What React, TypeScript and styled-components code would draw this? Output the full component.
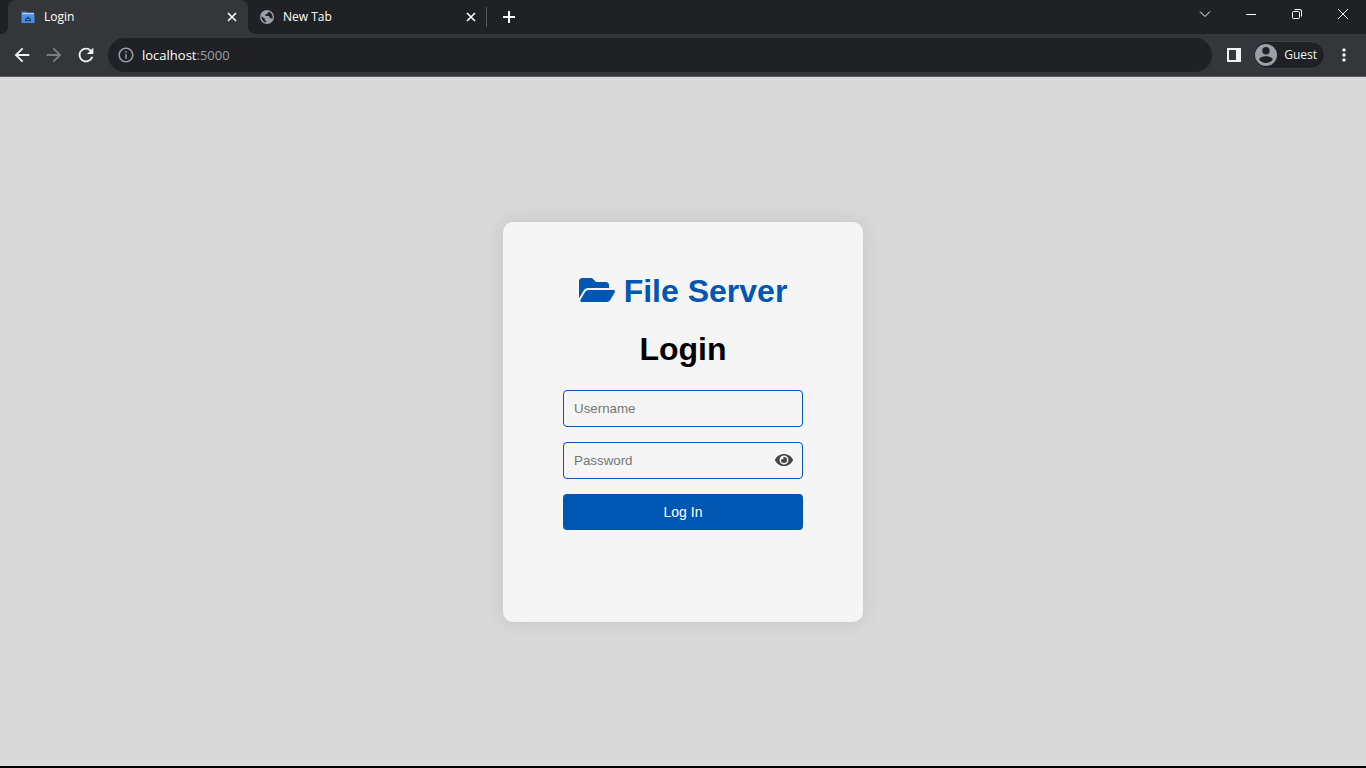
import React, { useState } from "react";
import styled, { createGlobalStyle } from "styled-components";
import { FaEye, FaFolderOpen } from "react-icons/fa";
import {
  MdArrowBack,
  MdArrowForward,
  MdInfoOutline,
  MdMoreVert,
  MdRefresh,
} from "react-icons/md";

const GlobalStyle = createGlobalStyle`
  *, *::before, *::after { box-sizing: border-box; }
  body { margin: 0; background: #d9d9d9; }
  svg { display: block; flex: none; }
`;

const uiFont = `"Open Sans", "Noto Sans", sans-serif`;
const pageFont = `"Liberation Sans", Arial, sans-serif`;

const Screen = styled.div`
  display: flex;
  flex-direction: column;
  min-height: 100vh;
  background: #d9d9d9;
  border-bottom: 2px solid #000;
`;

const TabStrip = styled.div`
  display: flex;
  height: 34px;
  padding-left: 8px;
  background: #202124;
  font-family: ${uiFont};
`;

const Tab = styled.div<{ $active?: boolean }>`
  position: relative;
  display: flex;
  align-items: center;
  gap: 8px;
  width: ${(p) => (p.$active ? 240 : 238)}px;
  padding: ${(p) => (p.$active ? "0 8px 0 12px" : "0 7px 0 11px")};
  color: #fff;
  background: ${(p) => (p.$active ? "#35363a" : "transparent")};
  border-radius: 8px 8px 0 0;

  &::before,
  &::after {
    content: ${(p) => (p.$active ? '""' : "none")};
    position: absolute;
    bottom: 0;
    width: 8px;
    height: 8px;
  }
  &::before {
    right: 100%;
    background: radial-gradient(circle at 0 0, transparent 8px, #35363a 8px);
  }
  &::after {
    left: 100%;
    background: radial-gradient(circle at 100% 0, transparent 8px, #35363a 8px);
  }
`;

const TabTitle = styled.span`
  flex: 1;
  font-size: 12px;
  line-height: 16px;
`;

const IconButton = styled.button<{ $width: number; $color?: string }>`
  display: flex;
  align-items: center;
  justify-content: center;
  flex: none;
  width: ${(p) => p.$width}px;
  height: 100%;
  padding: 0;
  border: 0;
  background: none;
  color: ${(p) => p.$color ?? "#f1f3f4"};
`;

const TabDivider = styled.span`
  align-self: center;
  width: 1px;
  height: 20px;
  margin-right: 6px;
  background: #54565a;
`;

const WindowControls = styled.div`
  display: flex;
  height: 28px;
  margin-left: auto;
`;

const Toolbar = styled.div`
  display: flex;
  align-items: center;
  height: 43px;
  padding: 0 6px;
  background: #35363a;
  border-bottom: 1px solid #5a5b5e;
  font-family: ${uiFont};
`;

const AddressBar = styled.div`
  display: flex;
  align-items: center;
  flex: 1;
  height: 34px;
  margin: 0 6px;
  padding: 0 9px;
  gap: 7px;
  border-radius: 17px;
  background: #202124;
  color: #9aa0a6;
  font-size: 13px;
  line-height: 18px;
`;

const Host = styled.span`
  color: #fff;
`;

const Profile = styled.button`
  display: flex;
  align-items: center;
  gap: 7px;
  height: 28px;
  margin: 0 3px;
  padding: 0 7px 0 1px;
  border: 1px solid #3c4043;
  border-radius: 14px;
  background: #202124;
  color: #f1f3f4;
  font-family: ${uiFont};
  font-size: 12px;
  line-height: 16px;
`;

const Main = styled.main`
  display: flex;
  flex: 1;
  align-items: center;
  justify-content: center;
  font-family: ${pageFont};
`;

const Card = styled.section`
  width: 360px;
  min-height: 400px;
  padding: 50px 60px;
  border-radius: 10px;
  background: #f5f5f5;
  box-shadow: 0 0 20px rgba(0, 0, 0, 0.1);
`;

const Heading = styled.h1<{ $brand?: boolean }>`
  display: flex;
  justify-content: center;
  gap: 9px;
  margin: 0 -10px 20px;
  color: ${(p) => (p.$brand ? "#0056b3" : "#000")};
  font-size: 32px;
  line-height: 38px;
  white-space: nowrap;
`;

const Form = styled.form`
  display: grid;
  gap: 15px;
  padding-top: 2px;
`;

const Field = styled.label`
  position: relative;
  display: block;
`;

const TextInput = styled.input`
  display: block;
  width: 100%;
  height: 37px;
  padding: 10px;
  border: 1px solid #0056b3;
  border-radius: 4px;
  background: transparent;
  font-family: ${pageFont};
  outline: none;

  &::placeholder {
    color: #757575;
  }
`;

const RevealButton = styled.button`
  position: absolute;
  top: 0;
  right: 10px;
  display: flex;
  align-items: center;
  height: 100%;
  padding: 0;
  border: 0;
  background: none;
  color: #444;
`;

const SubmitButton = styled.button`
  height: 36px;
  border: 0;
  border-radius: 4px;
  background: #0056b3;
  color: #fff;
  font-family: ${pageFont};
  font-size: 14px;
`;

const FolderFavicon = () => (
  <svg width="16" height="16" viewBox="0 0 16 16" aria-hidden="true">
    <path d="M1.500 2.500h5l1 1h6.500v3H1.500z" fill="#3f7fd0" />
    <path d="M2 4h12v1.500H2z" fill="#b9d2f0" />
    <path d="M1.500 5.500h13v8.500h-13z" fill="#4a90e2" />
    <path d="M5.500 11.700v-1.200l2.500-2.300 2.500 2.300v1.200z" fill="none" stroke="#1d3f70" strokeWidth="1.200" />
  </svg>
);

const GlobeIcon = () => (
  <svg width="16" height="16" viewBox="0 0 16 16" aria-hidden="true">
    <circle cx="8" cy="8" r="7" fill="#9aa0a6" />
    <path
      d="M9.500 2.600c.3 1-.3 1.700-1.400 1.800-.2 1-.9 1.200-1.800 1.200v1.500h3c1.300.1 1.300 1.200 1.300 2.100h1.200c.8 0 1.200.5 1.500 1 .9-2.900-.4-6.300-3.800-7.600zM2.600 7.200c-.4 3 1.500 5.800 4.500 6.200v-1.500c-.8-.1-1.300-.6-1.300-1.400v-.7z"
      fill="#202124"
    />
  </svg>
);

const AvatarIcon = () => (
  <svg width="22" height="22" viewBox="0 0 22 22" aria-hidden="true">
    <circle cx="11" cy="11" r="11" fill="#9aa0a6" />
    <circle cx="11" cy="6.700" r="3.700" fill="#202124" />
    <path d="M4.200 15.500c0-2.200 4.400-3.300 6.800-3.300s6.800 1.100 6.800 3.300c-1.400 2.100-4 3.400-6.800 3.400s-5.400-1.300-6.800-3.400z" fill="#202124" />
  </svg>
);

const SidePanelIcon = () => (
  <svg width="14" height="14" viewBox="0 0 14 14" aria-hidden="true">
    <path d="M0 0h14v14H0zM2 2v10h7V2z" fill="#f1f3f4" fillRule="evenodd" />
  </svg>
);

const lineIcon = { width: 12, height: 12, viewBox: "0 0 12 12", fill: "none", stroke: "#fff", "aria-hidden": true };

const TabCloseIcon = () => (
  <svg {...lineIcon} strokeWidth="1.600"><path d="M2 2l8 8M10 2l-8 8" /></svg>
);

export default function App() {
  const [revealed, setRevealed] = useState(false);

  return (
    <Screen>
      <GlobalStyle />
      <TabStrip>
        <Tab $active>
          <FolderFavicon />
          <TabTitle>Login</TabTitle>
          <IconButton $width={16} aria-label="Close Login tab"><TabCloseIcon /></IconButton>
        </Tab>
        <Tab>
          <GlobeIcon />
          <TabTitle>New Tab</TabTitle>
          <IconButton $width={16} aria-label="Close New Tab"><TabCloseIcon /></IconButton>
        </Tab>
        <TabDivider />
        <IconButton $width={32} aria-label="New tab">
          <svg {...lineIcon} strokeWidth="2"><path d="M6 0v12M0 6h12" /></svg>
        </IconButton>
        <WindowControls>
          <IconButton $width={46} aria-label="Search tabs">
            <svg {...lineIcon}><path d="M1 3.500l5 5 5-5" /></svg>
          </IconButton>
          <IconButton $width={46} aria-label="Minimize">
            <svg {...lineIcon}><path d="M1 6.500h10" /></svg>
          </IconButton>
          <IconButton $width={46} aria-label="Restore">
            <svg {...lineIcon}>
              <rect x="1.500" y="3.500" width="7" height="7" rx="1" />
              <path d="M3.500 1.500H9A1.500 1.500 0 0 1 10.500 3v5.500" />
            </svg>
          </IconButton>
          <IconButton $width={46} aria-label="Close window">
            <svg {...lineIcon}><path d="M1 1l10 10M11 1L1 11" /></svg>
          </IconButton>
        </WindowControls>
      </TabStrip>

      <Toolbar>
        <IconButton $width={32} aria-label="Back"><MdArrowBack size={22} /></IconButton>
        <IconButton $width={32} $color="#7d7e81" aria-label="Forward"><MdArrowForward size={22} /></IconButton>
        <IconButton $width={32} aria-label="Reload"><MdRefresh size={22} /></IconButton>
        <AddressBar>
          <MdInfoOutline size={18} />
          <span><Host>localhost</Host>:5000</span>
        </AddressBar>
        <IconButton $width={32} aria-label="Side panel"><SidePanelIcon /></IconButton>
        <Profile>
          <AvatarIcon />
          Guest
        </Profile>
        <IconButton $width={32} aria-label="Menu"><MdMoreVert size={20} /></IconButton>
      </Toolbar>

      <Main>
        <Card>
          <Heading $brand>
            <FaFolderOpen size={36} />
            File Server
          </Heading>
          <Heading>Login</Heading>
          <Form onSubmit={(e) => e.preventDefault()}>
            <Field>
              <TextInput type="text" placeholder="Username" aria-label="Username" />
            </Field>
            <Field>
              <TextInput type={revealed ? "text" : "password"} placeholder="Password" aria-label="Password" />
              <RevealButton type="button" aria-label="Show password" onClick={() => setRevealed(!revealed)}>
                <FaEye size={18} />
              </RevealButton>
            </Field>
            <SubmitButton type="submit">Log In</SubmitButton>
          </Form>
        </Card>
      </Main>
    </Screen>
  );
}
